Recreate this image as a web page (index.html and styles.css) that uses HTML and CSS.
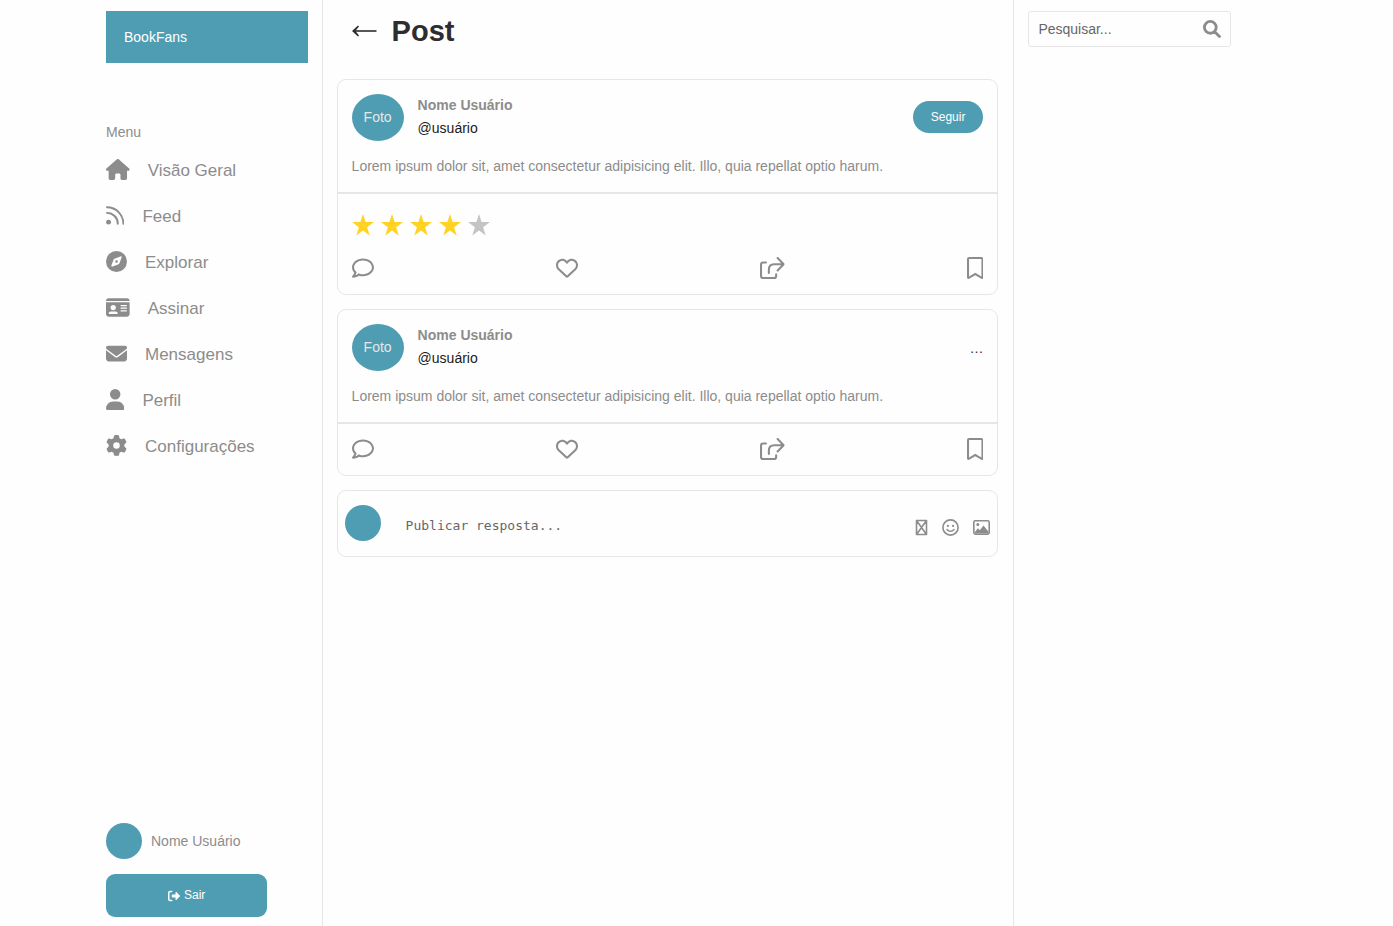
FILE: index.html
```html
<!DOCTYPE html>
<html lang="pt-BR">
<head>
<meta charset="utf-8">
<meta name="viewport" content="width=device-width, initial-scale=1">
<title>BookFans - Post</title>
<link rel="stylesheet" href="styles.css">
</head>
<body>
<svg class="sprite" aria-hidden="true">
  <symbol id="comment" viewBox="0 0 512 512"><path d="M256 32C114.6 32 .0272 125.1 .0272 240c0 47.63 19.91 91.25 52.91 126.2c-14.88 39.5-45.87 72.88-46.37 73.25c-6.625 7-8.375 17.25-4.625 26C5.818 474.2 14.38 480 24 480c61.5 0 109.1-25.75 139.1-46.25C191.1 442.8 223.3 448 256 448c141.4 0 255.1-93.13 255.1-208S397.4 32 256 32zM256.1 400c-26.75 0-53.12-4.125-78.38-12.12l-22.75-7.125l-19.5 13.75c-14.25 10.12-33.88 21.38-57.5 29c7.375-12.12 14.37-25.75 19.88-40.25l10.62-28l-20.62-21.87C69.82 314.1 48.07 282.2 48.07 240c0-88.25 93.25-160 208-160s208 71.75 208 160S370.8 400 256.1 400z"/></symbol>
  <symbol id="heart" viewBox="0 0 512 512"><path d="M244 84L256 96L267.1 84C300.6 51.37 347 36.51 392.6 44.1C461.5 55.58 512 115.2 512 185.1V190.9C512 232.4 494.8 272.1 464.4 300.4L283.7 469.1C276.2 476.1 266.3 480 256 480C245.7 480 235.8 476.1 228.3 469.1L47.59 300.4C17.23 272.1 0 232.4 0 190.9V185.1C0 115.2 50.52 55.58 119.4 44.1C164.1 36.51 211.4 51.37 244 84zM256 163.9L210.1 117.1C188.4 96.28 157.6 86.4 127.3 91.44C81.55 99.07 48 138.7 48 185.1V190.9C48 219.1 59.71 246.1 80.34 265.3L256 429.3L431.7 265.3C452.3 246.1 464 219.1 464 190.9V185.1C464 138.7 430.4 99.07 384.7 91.44C354.4 86.4 323.6 96.28 301.9 117.1L256 163.9z"/></symbol>
  <symbol id="share" viewBox="0 0 576 512"><path d="M138 130H72a48 48 0 0 0-48 48v262a48 48 0 0 0 48 48h256a48 48 0 0 0 48-48v-40M206 374v-80c0-76 50-126 126-126h214M410 24l140 144-140 144" fill="none" stroke="currentColor" stroke-width="48" stroke-linecap="round" stroke-linejoin="round"/></symbol>
  <symbol id="bookmark" viewBox="0 0 384 512"><path d="M336 0h-288C21.49 0 0 21.49 0 48v431.9c0 24.7 26.79 40.08 48.12 27.64L192 423.6l143.9 83.96C357.2 519.1 384 504.6 384 479.9V48C384 21.49 362.5 0 336 0zM336 452L192 368l-144 84V54C48 50.63 50.63 48 54 48h276C333.4 48 336 50.63 336 54V452z"/></symbol>
  <symbol id="star" viewBox="0 0 22 22"><path d="M11 0l2.6 8.1H22l-6.9 5.1 2.6 8.3L11 16.4l-6.7 5.1 2.6-8.3L0 8.1h8.4z"/></symbol>
</svg>
<div class="page">
  <aside class="sidebar">
    <a class="brand" href="#">BookFans</a>
    <nav class="menu" aria-labelledby="menu-title">
      <p class="menu-title" id="menu-title">Menu</p>
      <ul class="menu-list">
        <li><a href="#"><svg class="icon" viewBox="0 0 576 512"><path d="M575.8 255.5c0 18-15 32.1-32 32.1h-32l.7 160.2c0 2.7-.2 5.4-.5 8.1V472c0 22.1-17.9 40-40 40H392c-22.1 0-40-17.9-40-40V384c0-17.7-14.3-32-32-32H256c-17.7 0-32 14.3-32 32v88c0 22.1-17.9 40-40 40H104c-22.1 0-40-17.9-40-40V287.6H32c-18 0-32-14-32-32.1c0-9 3-17 10-24L266.4 8c7-7 15-8 22-8s15 2 21 7L564.8 231.5c8 7 12 15 11 24z"/></svg>Visão Geral</a></li>
        <li><a href="#"><svg class="icon" viewBox="0 0 448 512"><circle cx="62" cy="418" r="60"/><path d="M24 56c222 0 400 178 400 400M24 192c146 0 264 118 264 264" fill="none" stroke="currentColor" stroke-width="48" stroke-linecap="round"/></svg>Feed</a></li>
        <li><a href="#"><svg class="icon" viewBox="0 0 512 512"><path fill-rule="evenodd" d="M256 0a256 256 0 1 0 0 512 256 256 0 1 0 0-512zM325 306c-3 8-11 16-19 19l-144 55c-19 7-38-11-30-30l55-144c3-8 11-16 19-19l144-55c19-7 37 11 30 30zM256 224a32 32 0 1 0 0 64 32 32 0 1 0 0-64z"/></svg>Explorar</a></li>
        <li><a href="#"><svg class="icon" viewBox="0 0 576 512"><path fill-rule="evenodd" d="M0 96c0-35 29-64 64-64h448c35 0 64 29 64 64zM0 128h576v288c0 35-29 64-64 64H64c-35 0-64-29-64-64zM64 405c0 6 5 11 11 11h202c6 0 11-5 11-11 0-29-24-53-53-53H117c-29 0-53 24-53 53zM176 192a64 64 0 1 0 0 128 64 64 0 1 0 0-128zM368 192a16 16 0 0 0 0 32h128a16 16 0 0 0 0-32zM368 256a16 16 0 0 0 0 32h128a16 16 0 0 0 0-32zM368 320a16 16 0 0 0 0 32h128a16 16 0 0 0 0-32z"/></svg>Assinar</a></li>
        <li><a href="#"><svg class="icon" viewBox="0 0 512 512"><path d="M48 64C21.5 64 0 85.5 0 112c0 15.1 7.1 29.3 19.2 38.4L236.8 313.6c11.4 8.5 27 8.5 38.4 0L492.8 150.4c12.1-9.1 19.2-23.3 19.2-38.4c0-26.5-21.5-48-48-48H48zM0 176V384c0 35.3 28.7 64 64 64H448c35.3 0 64-28.7 64-64V176L294.4 339.2c-22.8 17.1-54 17.1-76.8 0L0 176z"/></svg>Mensagens</a></li>
        <li><a href="#"><svg class="icon" viewBox="0 0 448 512"><path d="M224 256A128 128 0 1 0 224 0a128 128 0 1 0 0 256zM174.3 304C78 304 0 382 0 478.3C0 498 14 512 29.7 512H418.3c16.4 0 29.7-14 29.7-33.7C448 382 370 304 273.7 304z"/></svg>Perfil</a></li>
        <li><a href="#"><svg class="icon" viewBox="0 0 512 512"><path d="M495.9 166.6c3.2 8.7 .5 18.4-6.4 24.6l-43.3 39.4c1.1 8.3 1.7 16.8 1.7 25.4s-.6 17.1-1.7 25.4l43.3 39.4c6.9 6.2 9.6 15.9 6.4 24.6c-4.4 11.9-9.7 23.3-15.8 34.3l-4.7 8.1c-6.6 11-14 21.4-22.1 31.2c-5.9 7.2-15.7 9.6-24.5 6.8l-55.7-17.7c-13.4 10.3-28.2 18.9-44 25.4l-12.5 57.1c-2 9.1-9 16.3-18.2 17.8c-13.8 2.3-28 3.5-42.5 3.5s-28.7-1.2-42.5-3.5c-9.2-1.5-16.2-8.7-18.2-17.8l-12.5-57.1c-15.8-6.5-30.6-15.1-44-25.4L83.1 425.9c-8.8 2.8-18.6 .3-24.5-6.8c-8.1-9.8-15.5-20.2-22.1-31.2l-4.7-8.1c-6.1-11-11.4-22.4-15.8-34.3c-3.2-8.7-.5-18.4 6.4-24.6l43.3-39.4C64.6 273.1 64 264.6 64 256s.6-17.1 1.7-25.4L22.4 191.2c-6.9-6.2-9.6-15.9-6.4-24.6c4.4-11.9 9.7-23.3 15.8-34.3l4.7-8.1c6.6-11 14-21.4 22.1-31.2c5.9-7.2 15.7-9.6 24.5-6.8l55.7 17.7c13.4-10.3 28.2-18.9 44-25.4l12.5-57.1c2-9.1 9-16.3 18.2-17.8C227.3 1.2 241.5 0 256 0s28.7 1.2 42.5 3.5c9.2 1.5 16.2 8.7 18.2 17.8l12.5 57.1c15.8 6.5 30.6 15.1 44 25.4l55.7-17.7c8.8-2.8 18.6-.3 24.5 6.8c8.1 9.8 15.5 20.2 22.1 31.2l4.7 8.1c6.1 11 11.4 22.4 15.8 34.3zM256 336a80 80 0 1 0 0-160 80 80 0 1 0 0 160z"/></svg>Configurações</a></li>
      </ul>
    </nav>
    <div class="account">
      <div class="account-user"><span class="dot"></span>Nome Usuário</div>
      <button class="logout" type="button"><svg class="icon" viewBox="0 0 512 512"><path d="M160 64H96a64 64 0 0 0-64 64v256a64 64 0 0 0 64 64h64" fill="none" stroke="currentColor" stroke-width="64" stroke-linecap="round"/><path d="M502.6 233.4L358.6 89.4C345 76 320 84 320 112v80H192c-17.7 0-32 14.3-32 32v64c0 17.7 14.3 32 32 32h128v80c0 28 25 36 38.6 22.6l144-144c12.5-12.5 12.5-32.7 0-45.2z"/></svg>Sair</button>
    </div>
  </aside>

  <main class="content">
    <header class="content-header">
      <a class="back" href="#" aria-label="Voltar"><svg class="icon" viewBox="0 0 25 12"><path d="M24.500 6H2" fill="none" stroke="currentColor" stroke-width="1.6"/><path d="M0 6L6 .6l1 1Q5 4 3.500 6 5 8 7 10.400l-1 1z"/></svg></a>
      <h1>Post</h1>
    </header>

    <div class="cards">
      <article class="card">
        <div class="post-head">
          <div class="author">
            <span class="avatar">Foto</span>
            <div class="author-text">
              <strong>Nome Usuário</strong>
              <span class="handle">@usuário</span>
            </div>
            <button class="follow" type="button">Seguir</button>
          </div>
          <p class="post-text">Lorem ipsum dolor sit, amet consectetur adipisicing elit. Illo, quia repellat optio harum.</p>
        </div>
        <div class="rating" role="img" aria-label="4 de 5 estrelas">
          <svg class="on"><use href="#star"/></svg>
          <svg class="on"><use href="#star"/></svg>
          <svg class="on"><use href="#star"/></svg>
          <svg class="on"><use href="#star"/></svg>
          <svg><use href="#star"/></svg>
        </div>
        <div class="actions">
          <button type="button" aria-label="Comentar"><svg class="icon" viewBox="0 0 512 512"><use href="#comment"/></svg></button>
          <button type="button" aria-label="Curtir"><svg class="icon" viewBox="0 0 512 512"><use href="#heart"/></svg></button>
          <button type="button" aria-label="Compartilhar"><svg class="icon" viewBox="0 0 576 512"><use href="#share"/></svg></button>
          <button type="button" aria-label="Salvar"><svg class="icon" viewBox="0 0 384 512"><use href="#bookmark"/></svg></button>
        </div>
      </article>

      <article class="card">
        <div class="post-head">
          <div class="author">
            <span class="avatar">Foto</span>
            <div class="author-text">
              <strong>Nome Usuário</strong>
              <span class="handle">@usuário</span>
            </div>
            <button class="more" type="button" aria-label="Mais opções">…</button>
          </div>
          <p class="post-text">Lorem ipsum dolor sit, amet consectetur adipisicing elit. Illo, quia repellat optio harum.</p>
        </div>
        <div class="actions">
          <button type="button" aria-label="Comentar"><svg class="icon" viewBox="0 0 512 512"><use href="#comment"/></svg></button>
          <button type="button" aria-label="Curtir"><svg class="icon" viewBox="0 0 512 512"><use href="#heart"/></svg></button>
          <button type="button" aria-label="Compartilhar"><svg class="icon" viewBox="0 0 576 512"><use href="#share"/></svg></button>
          <button type="button" aria-label="Salvar"><svg class="icon" viewBox="0 0 384 512"><use href="#bookmark"/></svg></button>
        </div>
      </article>

      <form class="card reply">
        <span class="dot"></span>
        <textarea rows="1" aria-label="Publicar resposta" placeholder="Publicar resposta..."></textarea>
        <div class="attach">
          <button type="button" aria-label="GIF"><svg class="icon" viewBox="0 0 13 17"><path d="M1.500 1.500h10v14h-10zM1.500 1.500l10 14M11.500 1.500l-10 14" fill="none" stroke="currentColor" stroke-width="1.6" stroke-linejoin="round"/></svg></button>
          <button type="button" aria-label="Emoji"><svg class="icon" viewBox="0 0 17 17"><circle cx="8.5" cy="8.5" r="7.6" fill="none" stroke="currentColor" stroke-width="1.6"/><circle cx="5.9" cy="6.9" r="1.1"/><circle cx="11.1" cy="6.9" r="1.1"/><path d="M5 10.500c1.800 2.400 5.200 2.400 7 0" fill="none" stroke="currentColor" stroke-width="1.5" stroke-linecap="round"/></svg></button>
          <button type="button" aria-label="Imagem"><svg class="icon" viewBox="0 0 17 17"><rect x=".8" y="1.8" width="15.4" height="13.4" rx="1.6" fill="none" stroke="currentColor" stroke-width="1.6"/><circle cx="4.8" cy="5.6" r="1.5"/><path d="M2 14.500v-1.800l3-3.400 1.800 2L10.500 6.500l4.800 6v2z"/></svg></button>
        </div>
      </form>
    </div>
  </main>

  <aside class="extra">
    <form class="search" role="search">
      <input type="text" aria-label="Pesquisar" placeholder="Pesquisar...">
      <button type="button" aria-label="Buscar"><svg class="icon" viewBox="0 0 512 512"><path d="M208 40a168 168 0 1 1 0 336 168 168 0 1 1 0-336zM332 332l136 136" fill="none" stroke="currentColor" stroke-width="80" stroke-linecap="round"/></svg></button>
    </form>
  </aside>
</div>
</body>
</html>
```
FILE: styles.css
```css
:root {
  --primary: #4f9db2;
  --gray: #8c8c8c;
  --dark: #2d2d2f;
  --line: #e6e6e6;
}

*,
*::before,
*::after {
  box-sizing: border-box;
  margin: 0;
  padding: 0;
}

body {
  background: #fefefe;
  color: var(--gray);
  font-family: "Liberation Sans", Arial, sans-serif;
  font-size: 14px;
  line-height: 18px;
}

a {
  color: inherit;
  text-decoration: none;
}

button {
  background: none;
  border: 0;
  color: inherit;
  font: inherit;
  cursor: pointer;
}

.sprite {
  display: none;
}

.icon {
  display: block;
  fill: currentColor;
  height: 22px;
}

.dot {
  background: var(--primary);
  border-radius: 50%;
  flex: none;
  height: 36px;
  width: 36px;
}

.page {
  display: grid;
  grid-template-columns: minmax(0, 1fr) minmax(0, 3fr) minmax(0, 1fr);
  min-height: 100vh;
  padding: 0 148px 0 92px;
}

.sidebar {
  border-right: 1px solid var(--line);
  display: flex;
  flex-direction: column;
  padding: 11px 14px 9px;
}

.brand {
  background: var(--primary);
  color: #fff;
  padding: 17px 18px;
}

.menu {
  margin-top: 60px;
}

.menu-list {
  list-style: none;
  margin-top: 6px;
}

.menu-list a {
  align-items: center;
  display: flex;
  font-size: 17px;
  gap: 18px;
  line-height: 23px;
  padding: 12px 0 11px;
}

.menu-list .icon {
  height: 21px;
  margin-bottom: 2px;
}

.account {
  display: grid;
  gap: 15px;
  margin-top: auto;
}

.account-user {
  align-items: center;
  display: flex;
  gap: 9px;
}

.logout {
  align-items: center;
  background: var(--primary);
  border-radius: 9px;
  color: #fff;
  display: flex;
  font-size: 12px;
  gap: 4px;
  justify-content: center;
  line-height: 19px;
  padding: 12px;
  width: 80%;
}

.logout .icon {
  height: 12px;
}

.content {
  border-right: 1px solid var(--line);
  padding: 0 15px 0 14px;
}

.content-header {
  align-items: center;
  color: var(--dark);
  display: flex;
  gap: 15px;
  padding: 14px 15px 31px;
}

.content-header .icon {
  height: 12px;
}

.content-header h1 {
  font-size: 29px;
  line-height: 34px;
}

.cards {
  display: grid;
  gap: 14px;
}

.card {
  border: 1px solid var(--line);
  border-radius: 9px;
}

.post-head {
  border-bottom: 2px solid var(--line);
  padding: 14px 14px 17px;
}

.author {
  align-items: center;
  display: flex;
  gap: 14px;
}

.avatar {
  background: var(--primary);
  border-radius: 50%;
  color: #e6e6e6;
  line-height: 47px;
  text-align: center;
  width: 52px;
}

.author-text {
  display: grid;
  flex: 1;
  line-height: 23px;
  padding-bottom: 1px;
}

.handle {
  color: #1a1a1a;
}

.follow {
  background: var(--primary);
  border-radius: 16px;
  color: #fff;
  font-size: 12px;
  margin-bottom: 1px;
  padding: 7px 18px;
}

.more {
  color: var(--dark);
}

.post-text {
  margin-top: 16px;
}

.rating {
  display: flex;
  gap: 7px;
  padding: 20px 14px 7px;
}

.rating svg {
  fill: #c4c4c4;
  height: 22px;
  width: 22px;
}

.rating .on {
  fill: #ffd224;
}

.actions {
  display: flex;
  justify-content: space-between;
  padding: 14px 14px 15px;
}

.reply {
  align-items: center;
  display: flex;
  padding: 14px 7px 15px;
}

.reply textarea {
  background: none;
  border: 0;
  color: var(--dark);
  flex: 1;
  font: 13px/18px "DejaVu Sans Mono", monospace;
  height: 18px;
  margin: 6px 0 0 25px;
  min-width: 0;
  outline: none;
  overflow: hidden;
  resize: none;
}

.reply textarea::placeholder,
.search input::placeholder {
  color: #666;
  opacity: 1;
}

.attach {
  display: flex;
  gap: 14px;
  margin-top: 8px;
}

.attach .icon {
  height: 17px;
}

.extra {
  padding: 11px 14px;
}

.search {
  align-items: center;
  border: 1px solid var(--line);
  border-radius: 3px;
  display: flex;
  padding: 8px 9px;
}

.search input {
  background: none;
  border: 0;
  color: var(--dark);
  flex: 1;
  font: inherit;
  min-width: 0;
  outline: none;
}

.search .icon {
  height: 18px;
}
```
